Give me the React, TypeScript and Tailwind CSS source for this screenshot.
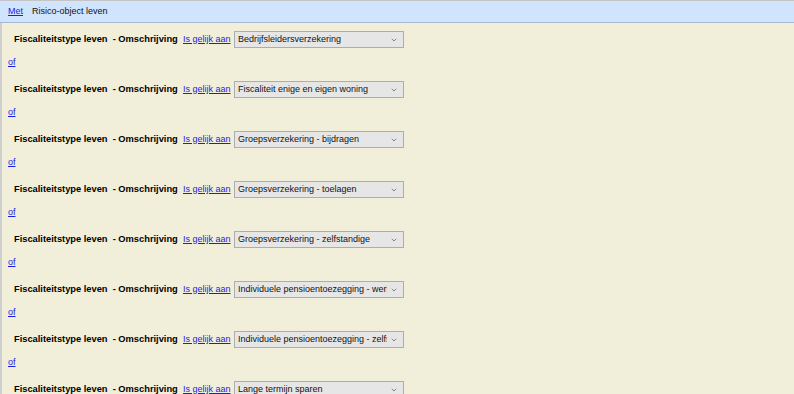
import { ChevronDown } from "lucide-react";

const VALUES = [
  "Bedrijfsleidersverzekering",
  "Fiscaliteit enige en eigen woning",
  "Groepsverzekering - bijdragen",
  "Groepsverzekering - toelagen",
  "Groepsverzekering - zelfstandige",
  "Individuele pensioentoezegging - werknemers",
  "Individuele pensioentoezegging - zelfstandigen",
  "Lange termijn sparen",
];

function ConditionRow({ value }: { value: string }) {
  return (
    <div className="flex items-center h-[17px] pl-[12px]">
      <div className="w-[169px] shrink-0 whitespace-pre font-bold text-[9.3px] text-black">
        {"Fiscaliteitstype leven  - Omschrijving"}
      </div>
      <a href="#" className="w-[51px] shrink-0 text-[9px] text-[#1c1ce6] underline">
        Is gelijk aan
      </a>
      <div className="relative w-[170px] h-[17px] shrink-0 bg-[#e6e6e6] border border-[#adadad] flex items-center pl-[3px] pr-[16px] overflow-hidden">
        <span className="whitespace-nowrap overflow-hidden text-[9px] text-[#111]">{value}</span>
        <ChevronDown className="absolute right-[5px] top-[4px] w-[8px] h-[8px] text-[#555]" strokeWidth={2} />
      </div>
    </div>
  );
}

export default function App() {
  return (
    <div className="w-[794px] h-[394px] overflow-hidden bg-[#f1eed9] font-['Liberation_Sans',Arial,sans-serif]">
      <div className="h-[23px] bg-[#d0e4fd] border-t border-[#c4c4c4] border-b border-b-[#a9b9d2] flex items-center pl-[8px] gap-[9px] text-[9px]">
        <a href="#" className="text-[#1c1ce6] underline">Met</a>
        <span className="text-[#111]">Risico-object leven</span>
      </div>
      <div className="border-l-2 border-[#cfcfcf] h-full pt-[8px]">
        {VALUES.map((v, i) => (
          <div key={i} className={i === 0 ? "" : "mt-[12px]"}>
            <ConditionRow value={v} />
            <div className="mt-[8px] pl-[6px] h-[13px] flex items-center">
              <a href="#" className="text-[9px] text-[#1c1ce6] underline">of</a>
            </div>
          </div>
        ))}
      </div>
    </div>
  );
}
